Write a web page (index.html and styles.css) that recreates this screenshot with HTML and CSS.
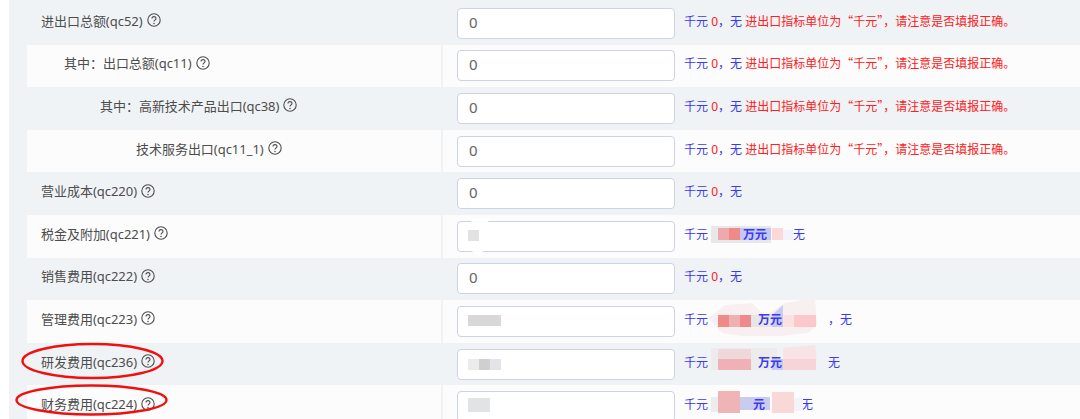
FILE: index.html
```html
<!DOCTYPE html>
<html lang="zh">
<head>
<meta charset="utf-8">
<title>财务指标</title>
<link rel="stylesheet" href="styles.css">
</head>
<body>
<main class="sheet">
  <div class="row alt">
    <div class="label"><span>进出口总额(qc52)</span><svg class="help" viewBox="0 0 14 14"><use href="#q"/></svg></div>
    <div class="value"><div class="field">0</div><p class="hint">千元 <b class="red">0</b>，无 <span class="red note">进出口指标单位为“千元”，请注意是否填报正确。</span></p></div>
  </div>
  <div class="row">
    <div class="label ind1"><span>其中：出口总额(qc11)</span><svg class="help" viewBox="0 0 14 14"><use href="#q"/></svg></div>
    <div class="value"><div class="field">0</div><p class="hint">千元 <b class="red">0</b>，无 <span class="red note">进出口指标单位为“千元”，请注意是否填报正确。</span></p></div>
  </div>
  <div class="row alt">
    <div class="label ind2"><span>其中：高新技术产品出口(qc38)</span><svg class="help" viewBox="0 0 14 14"><use href="#q"/></svg></div>
    <div class="value"><div class="field">0</div><p class="hint">千元 <b class="red">0</b>，无 <span class="red note">进出口指标单位为“千元”，请注意是否填报正确。</span></p></div>
  </div>
  <div class="row">
    <div class="label ind3"><span>技术服务出口(qc11_1)</span><svg class="help" viewBox="0 0 14 14"><use href="#q"/></svg></div>
    <div class="value"><div class="field">0</div><p class="hint">千元 <b class="red">0</b>，无 <span class="red note">进出口指标单位为“千元”，请注意是否填报正确。</span></p></div>
  </div>
  <div class="row alt">
    <div class="label"><span>营业成本(qc220)</span><svg class="help" viewBox="0 0 14 14"><use href="#q"/></svg></div>
    <div class="value"><div class="field">0</div><p class="hint">千元 <b class="red">0</b>，无</p></div>
  </div>
  <div class="row">
    <div class="label"><span>税金及附加(qc221)</span><svg class="help" viewBox="0 0 14 14"><use href="#q"/></svg></div>
    <div class="value"><div class="field">0</div><p class="hint">千元<i class="gap g35"></i><b>万元</b><i class="gap g26"></i>无</p></div>
  </div>
  <div class="row alt">
    <div class="label"><span>销售费用(qc222)</span><svg class="help" viewBox="0 0 14 14"><use href="#q"/></svg></div>
    <div class="value"><div class="field">0</div><p class="hint">千元 <b class="red">0</b>，无</p></div>
  </div>
  <div class="row">
    <div class="label"><span>管理费用(qc223)</span><svg class="help" viewBox="0 0 14 14"><use href="#q"/></svg></div>
    <div class="value"><div class="field"></div><p class="hint">千元<i class="gap g50"></i><b>万元</b><i class="gap g46"></i>，无</p></div>
  </div>
  <div class="row alt">
    <div class="label"><span>研发费用(qc236)</span><svg class="help" viewBox="0 0 14 14"><use href="#q"/></svg></div>
    <div class="value"><div class="field"></div><p class="hint">千元<i class="gap g50"></i><b>万元</b><i class="gap g46b"></i>无</p></div>
  </div>
  <div class="row">
    <div class="label"><span>财务费用(qc224)</span><svg class="help" viewBox="0 0 14 14"><use href="#q"/></svg></div>
    <div class="value"><div class="field"></div><p class="hint">千元<i class="gap g45"></i><b>元</b><i class="gap g36"></i>无</p></div>
  </div>
</main>

<svg class="defs" width="0" height="0" aria-hidden="true">
  <symbol id="q" viewBox="0 0 14 14">
    <circle cx="7" cy="7" r="6.2" fill="none" stroke="currentColor" stroke-width="1.1"/>
    <path d="M5 5.6a2 2 0 0 1 4 0c0 1.3-2 1.4-2 3" fill="none" stroke="currentColor" stroke-width="1.1"/>
    <circle cx="7" cy="10.4" r=".75" fill="currentColor"/>
  </symbol>
</svg>

<svg class="marks" viewBox="0 0 1080 419" aria-hidden="true">
  <!-- row 6 -->
  <path d="M464 232 473 219 488 218 490 240 480 256 470 250Z" fill="#fff" opacity=".9"/>
  <rect x="468" y="230" width="11" height="11" fill="#e2e2e2"/>
  <rect x="711" y="226" width="60" height="17" fill="#e8e8e8"/>
  <rect x="718" y="228" width="11" height="12" fill="#eeaaaa"/>
  <rect x="729" y="228" width="11" height="12" fill="#f08a8a"/>
  <rect x="740" y="228" width="31" height="12" fill="#c5c8f0"/>
  <rect x="772" y="228" width="11" height="12" fill="#fcd8d8"/>
  <rect x="783" y="230" width="10" height="10" fill="#f3f3fb"/>
  <!-- row 8 -->
  <path d="M708 318 725 305 752 303 765 316 785 303 815 298 817 325 808 333 780 336 742 336 722 333Z" fill="#f8f0f0"/>
  <rect x="468" y="315" width="33" height="11" fill="#d8d8d8"/>
  <rect x="718" y="315" width="11" height="12" fill="#f08a8a"/>
  <rect x="729" y="315" width="11" height="12" fill="#eeb0b0"/>
  <rect x="740" y="315" width="11" height="12" fill="#f08a8a"/>
  <rect x="751" y="315" width="32" height="12" fill="#e6e6e6"/>
  <path d="M772 315 783 305V327H772Z" fill="#c9ccf0"/>
  <rect x="783" y="315" width="11" height="12" fill="#fbe2e2"/>
  <rect x="794" y="315" width="22" height="12" fill="#fdc8cc"/>
  <!-- row 9 -->
  <path d="M460 363 477 356 500 366 507 372 476 373 465 370Z" fill="#fff"/>
  <rect x="468" y="359" width="11" height="11" fill="#ebebeb"/>
  <rect x="479" y="359" width="11" height="11" fill="#cfcfcf"/>
  <rect x="490" y="359" width="11" height="11" fill="#e2e4e8"/>
  <rect x="711" y="348" width="66" height="22" fill="#ececec"/>
  <rect x="718" y="349" width="33" height="10" fill="#efd8dc"/>
  <rect x="718" y="359" width="33" height="11" fill="#efb0b6"/>
  <rect x="772" y="359" width="11" height="11" fill="#c9ccf0"/>
  <rect x="783" y="359" width="33" height="11" fill="#f7d4d8"/>
  <path d="M783 348 815 345 817 359 783 359Z" fill="#f8e4e6"/>
  <!-- row 10 -->
  <path d="M462 396 476 392 490 396 491 412 470 412Z" fill="#fff"/>
  <rect x="468" y="398" width="22" height="14" fill="#e2e3e5"/>
  <rect x="711" y="397" width="29" height="15" fill="#ececec"/>
  <rect x="718" y="391" width="22" height="22" fill="#efb4b6"/>
  <rect x="740" y="397" width="30" height="13" fill="#c9ccf0"/>
  <rect x="772" y="392" width="22" height="21" fill="#f9d8d8"/>
  <rect x="794" y="398" width="9" height="13" fill="#f3f3fb"/>
  <!-- hand-drawn circles -->
  <ellipse cx="92.5" cy="361" rx="70" ry="17" fill="none" stroke="#f01010" stroke-width="2.4"/>
  <ellipse cx="91.5" cy="400" rx="75" ry="14.5" fill="none" stroke="#f01010" stroke-width="2.4"/>
</svg>
</body>
</html>
```

FILE: styles.css
```css
html, body {
  margin: 0;
  height: 419px;
  overflow: hidden;
  background: #fff;
}
body {
  position: relative;
  font-family: "Noto Sans", "Noto Sans CJK SC", sans-serif;
  font-size: 13px;
  color: #4d4d4d;
}
.sheet {
  margin-left: 9px;
  padding: 2px 0 0 18px;
  background: #f0f3f6;
  display: grid;
  grid-auto-rows: 42.6px;
}
.row {
  display: flex;
  background: #fcfcfc;
}
.row.alt {
  background: #f0f3f6;
}
.label {
  width: 414px;
  box-sizing: border-box;
  padding: 0 0 6px 14px;
  display: flex;
  align-items: center;
  gap: 4px;
  letter-spacing: -0.03px;
}
.ind1 { padding-left: 37px; }
.ind2 { padding-left: 73px; }
.ind3 { padding-left: 109px; }
.help {
  width: 14px;
  height: 14px;
  color: #4d4d4d;
}
.value {
  flex: 1;
  display: flex;
  align-items: center;
  gap: 9px;
  padding-left: 14px;
  border-left: 2px solid #f0f3f6;
}
.field {
  width: 218px;
  height: 31px;
  box-sizing: border-box;
  border: 1px solid #ccd3e4;
  border-radius: 4px;
  background: #fff;
  padding-left: 11px;
  font-size: 15px;
  line-height: 27px;
  color: #666;
}
.hint {
  margin: 0 0 5px;
  font-size: 12px;
  color: #3a3af0;
  white-space: pre-wrap;
}
.hint b {
  position: relative;
  z-index: 1;
  font-weight: 700;
}
.red {
  color: #ff2020;
}
.hint b.red {
  font-weight: 400;
}
.note {
  font-family: "Noto Sans CJK SC", sans-serif;
}
.gap {
  display: inline-block;
}
.g35 { width: 35px; }
.g26 { width: 26px; }
.g50 { width: 50px; }
.g46 { width: 46px; }
.g46b { width: 46px; }
.g45 { width: 45px; }
.g36 { width: 36px; }
.defs {
  position: absolute;
}
.marks {
  position: absolute;
  left: 0;
  top: 0;
  width: 1080px;
  height: 419px;
  pointer-events: none;
}
```
